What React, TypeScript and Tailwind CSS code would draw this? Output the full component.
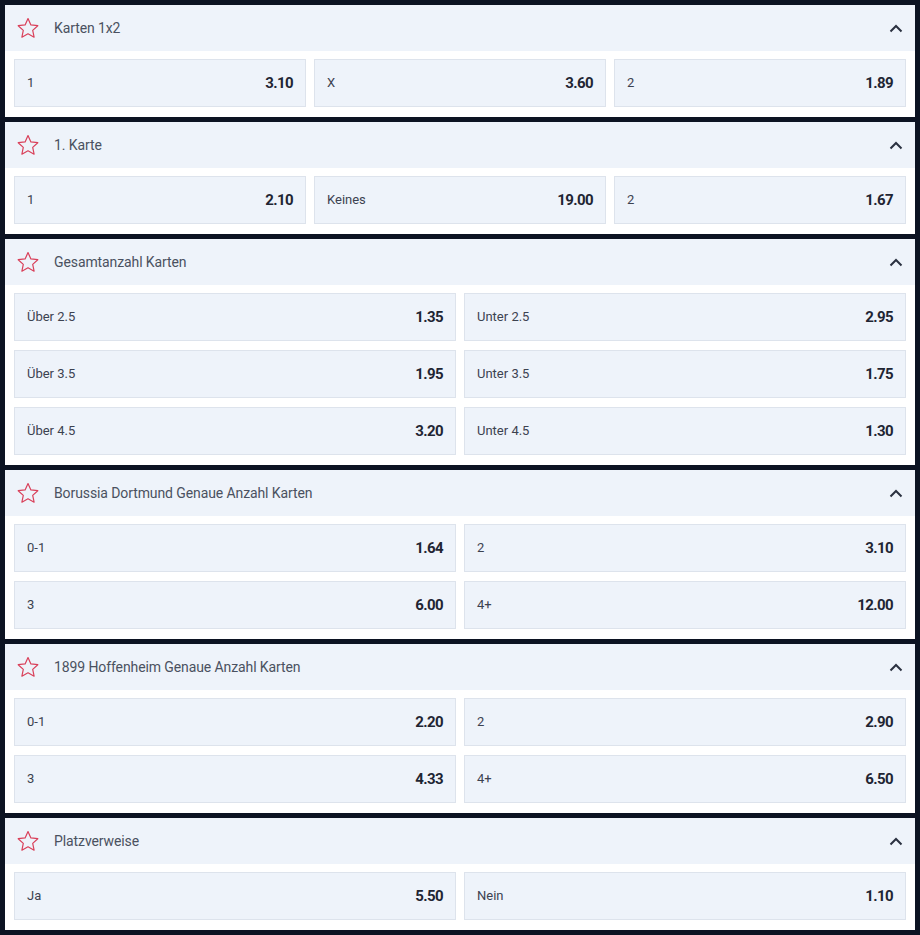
import React from "react";

type Odd = { label: string; value: string };
type Market = { title: string; cols: number; odds: Odd[] };

const markets: Market[] = [
  {
    title: "Karten 1x2",
    cols: 3,
    odds: [
      { label: "1", value: "3.10" },
      { label: "X", value: "3.60" },
      { label: "2", value: "1.89" },
    ],
  },
  {
    title: "1. Karte",
    cols: 3,
    odds: [
      { label: "1", value: "2.10" },
      { label: "Keines", value: "19.00" },
      { label: "2", value: "1.67" },
    ],
  },
  {
    title: "Gesamtanzahl Karten",
    cols: 2,
    odds: [
      { label: "Über 2.5", value: "1.35" },
      { label: "Unter 2.5", value: "2.95" },
      { label: "Über 3.5", value: "1.95" },
      { label: "Unter 3.5", value: "1.75" },
      { label: "Über 4.5", value: "3.20" },
      { label: "Unter 4.5", value: "1.30" },
    ],
  },
  {
    title: "Borussia Dortmund Genaue Anzahl Karten",
    cols: 2,
    odds: [
      { label: "0-1", value: "1.64" },
      { label: "2", value: "3.10" },
      { label: "3", value: "6.00" },
      { label: "4+", value: "12.00" },
    ],
  },
  {
    title: "1899 Hoffenheim Genaue Anzahl Karten",
    cols: 2,
    odds: [
      { label: "0-1", value: "2.20" },
      { label: "2", value: "2.90" },
      { label: "3", value: "4.33" },
      { label: "4+", value: "6.50" },
    ],
  },
  {
    title: "Platzverweise",
    cols: 2,
    odds: [
      { label: "Ja", value: "5.50" },
      { label: "Nein", value: "1.10" },
    ],
  },
];

function StarIcon() {
  return (
    <svg width="24" height="22" viewBox="0 0 24 22" fill="none" className="shrink-0">
      <path
        d="M12 1.6l2.9 6.3 6.9.8-5.1 4.7 1.4 6.8L12 16.8 5.9 20.2l1.4-6.8L2.2 8.7l6.9-.8z"
        stroke="#d9405a"
        strokeWidth="1.2"
        strokeLinejoin="round"
      />
    </svg>
  );
}

function ChevronUp() {
  return (
    <svg width="14" height="9" viewBox="0 0 14 9" fill="none" className="shrink-0">
      <polyline points="1.5,7.5 7,2 12.5,7.5" stroke="#2b3140" strokeWidth="2" />
    </svg>
  );
}

function MarketCard({ m }: { m: Market }) {
  return (
    <div className="flex flex-col">
      <div className="flex h-[46px] items-center bg-[#eef3fa] pl-[11px] pr-[12px]">
        <StarIcon />
        <span className="ml-[14px] flex-1 text-[14px] tracking-[-0.1px] text-[#4a5160]">{m.title}</span>
        <ChevronUp />
      </div>
      <div
        className={
          "grid gap-x-[8px] gap-y-[9px] bg-white px-[9px] pt-[8px] pb-[10px] " +
          (m.cols === 3 ? "grid-cols-3" : "grid-cols-2")
        }
      >
        {m.odds.map((o, i) => (
          <div
            key={i}
            className="flex h-[48px] items-center justify-between border border-[#dde3ec] bg-[#eef3fa] pl-[12px] pr-[12px]"
          >
            <span className="text-[13px] text-[#3c4250]">{o.label}</span>
            <span className="text-[15px] font-bold tracking-[-0.6px] text-[#1f2533]">{o.value}</span>
          </div>
        ))}
      </div>
    </div>
  );
}

export default function App() {
  return (
    <div
      className="flex min-h-[935px] w-[920px] flex-col gap-[5px] bg-[#0c1322] p-[5px]"
      style={{ fontFamily: "Roboto, 'Liberation Sans', sans-serif" }}
    >
      {markets.map((m, i) => (
        <MarketCard key={i} m={m} />
      ))}
    </div>
  );
}
